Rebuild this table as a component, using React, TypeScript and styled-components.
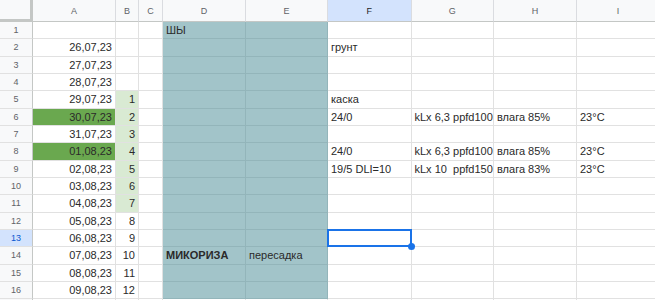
import React from 'react';
import styled, { createGlobalStyle } from 'styled-components';

const GlobalStyle = createGlobalStyle`
  html, body {
    margin: 0;
    padding: 0;
    background: #ffffff;
    overflow: hidden;
  }
  body {
    font-family: 'Liberation Sans', Arial, sans-serif;
  }
`;

const COLUMNS = ['A', 'B', 'C', 'D', 'E', 'F', 'G', 'H', 'I'];
const SELECTED_COL = 'F';
const SELECTED_ROW = 13;

const Sheet = styled.div`
  display: grid;
  grid-template-columns: 33px 83px 23px 24px 83px 82px 83.5px 82.5px 83px 83px;
  grid-template-rows: 22px repeat(17, 17.33px);
  width: 655px;
  height: 300px;
  overflow: hidden;
  font-family: 'Liberation Sans', Arial, sans-serif;
`;

const Corner = styled.div`
  background: #f8f9fa;
  border-right: 3px solid #c4c7c5;
  border-bottom: 3px solid #c4c7c5;
  box-sizing: border-box;
`;

const ColHeader = styled.div<{ $active?: boolean }>`
  display: flex;
  align-items: center;
  justify-content: center;
  box-sizing: border-box;
  background: ${({ $active }) => ($active ? '#d3e3fd' : '#f8f9fa')};
  color: ${({ $active }) => ($active ? '#1f1f1f' : '#5f6368')};
  font-size: 9px;
  border-right: 1px solid #dadce0;
  border-bottom: 1px solid #c4c7c5;
`;

const RowHeader = styled.div<{ $active?: boolean }>`
  display: flex;
  align-items: center;
  justify-content: center;
  box-sizing: border-box;
  background: ${({ $active }) => ($active ? '#d3e3fd' : '#f8f9fa')};
  color: ${({ $active }) => ($active ? '#0b57d0' : '#5f6368')};
  font-size: 9px;
  border-right: 1px solid #c4c7c5;
  border-bottom: 1px solid #e1e1e1;
`;

const Cell = styled.div<{
  $fill?: string;
  $align?: 'left' | 'right';
  $bold?: boolean;
  $selected?: boolean;
}>`
  position: relative;
  box-sizing: border-box;
  background: ${({ $fill }) => $fill || '#ffffff'};
  border-right: 1px solid ${({ $fill }) => ($fill === '#a2c4c9' ? '#93b5ba' : '#e1e1e1')};
  border-bottom: 1px solid ${({ $fill }) => ($fill === '#a2c4c9' ? '#93b5ba' : '#e1e1e1')};
  padding: 0 3px;
  font-size: 11px;
  line-height: 17px;
  color: #2a2a2a;
  font-weight: ${({ $bold }) => ($bold ? 700 : 400)};
  text-align: ${({ $align }) => $align || 'left'};
  white-space: pre;
  overflow: visible;
  z-index: ${({ $align, $selected }) => ($selected ? 5 : $align === 'right' ? 0 : 1)};
`;

const Selection = styled.div`
  position: absolute;
  left: -1px;
  top: -1px;
  right: -1px;
  bottom: -1px;
  border: 2px solid #1a73e8;
  pointer-events: none;

  &:after {
    content: '';
    position: absolute;
    right: -5px;
    bottom: -5px;
    width: 7px;
    height: 7px;
    border-radius: 50%;
    background: #1a73e8;
  }
`;

type Row = Partial<Record<string, string>> & { greenA?: boolean };

const rows: Row[] = [
  { D: 'ШЫ' },
  { A: '26,07,23', F: 'грунт' },
  { A: '27,07,23' },
  { A: '28,07,23' },
  { A: '29,07,23', B: '1', F: 'каска' },
  { A: '30,07,23', greenA: true, B: '2', F: '24/0', G: 'kLx 6,3 ppfd100', H: 'влага 85%', I: '23°C' },
  { A: '31,07,23', B: '3' },
  { A: '01,08,23', greenA: true, B: '4', F: '24/0', G: 'kLx 6,3 ppfd100', H: 'влага 85%', I: '23°C' },
  { A: '02,08,23', B: '5', F: '19/5 DLI=10', G: 'kLx 10  ppfd150', H: 'влага 83%', I: '23°C' },
  { A: '03,08,23', B: '6' },
  { A: '04,08,23', B: '7' },
  { A: '05,08,23', B: '8' },
  { A: '06,08,23', B: '9' },
  { A: '07,08,23', B: '10', D: 'МИКОРИЗА', E: 'пересадка' },
  { A: '08,08,23', B: '11' },
  { A: '09,08,23', B: '12' },
  {},
];

function fillFor(col: string, row: Row, index: number): string | undefined {
  if (col === 'D' || col === 'E') return index < 16 ? '#a2c4c9' : undefined;
  if (col === 'A' && row.greenA) return '#6aa84f';
  if (col === 'B' && index >= 4 && index <= 10) return '#d9ead3';
  return undefined;
}

export default function App() {
  return (
    <>
      <GlobalStyle />
      <Sheet>
        <Corner />
        {COLUMNS.map((c) => (
          <ColHeader key={c} $active={c === SELECTED_COL}>
            {c}
          </ColHeader>
        ))}
        {rows.map((row, i) => {
          const num = i + 1;
          // the last row only peeks in under the bottom edge
          const visible = num <= 16;
          return (
            <React.Fragment key={num}>
              <RowHeader $active={num === SELECTED_ROW}>{visible ? num : ''}</RowHeader>
              {COLUMNS.map((c) => {
                const selected = c === SELECTED_COL && num === SELECTED_ROW;
                return (
                  <Cell
                    key={c}
                    $fill={fillFor(c, row, i)}
                    $align={c === 'A' || c === 'B' ? 'right' : 'left'}
                    $bold={c === 'D' && num === 14}
                    $selected={selected}
                  >
                    {row[c]}
                    {selected && <Selection />}
                  </Cell>
                );
              })}
            </React.Fragment>
          );
        })}
      </Sheet>
    </>
  );
}
